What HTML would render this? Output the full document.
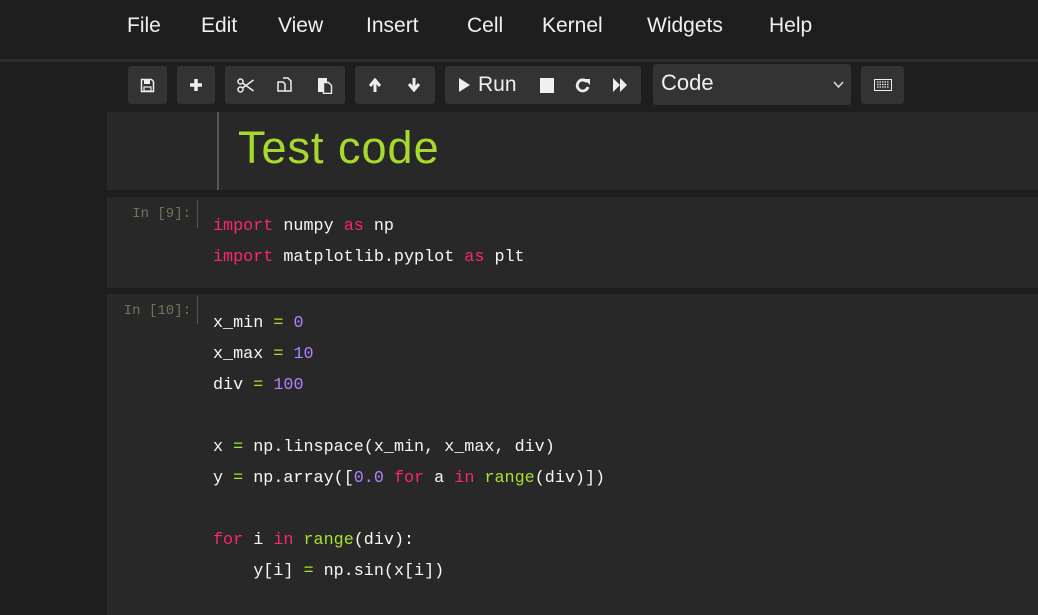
<!DOCTYPE html>
<html><head><style>
*{margin:0;padding:0;box-sizing:border-box}
body{width:1038px;height:615px;background:#1e1e1e;overflow:hidden;position:relative;font-family:"Liberation Sans",sans-serif;color:#fff}
.abs{position:absolute}
.menu{font-size:21px;top:14px;color:#f0f0f0}
.btn{position:absolute;top:66px;height:38px;background:#333;border-radius:3px}
.ic{position:absolute;top:0;height:38px;line-height:38px;font-size:17px;text-align:center;color:#eee}
.code{font-family:"Liberation Mono",monospace;font-size:16.75px;color:#f8f8f2;position:absolute;left:213px;white-space:pre;line-height:31px}
.k{color:#f92672}.n{color:#ae81ff}.o{color:#a6e22e}.b{color:#a6e22e}
.pr{position:absolute;font-family:"Liberation Mono",monospace;font-size:14px;color:#75715e;text-align:right;width:90px}
</style></head><body>
<div class="abs menu" style="left:127px">File</div>
<div class="abs menu" style="left:201px">Edit</div>
<div class="abs menu" style="left:278px">View</div>
<div class="abs menu" style="left:366px">Insert</div>
<div class="abs menu" style="left:467px">Cell</div>
<div class="abs menu" style="left:542px">Kernel</div>
<div class="abs menu" style="left:647px">Widgets</div>
<div class="abs menu" style="left:769px">Help</div>
<div class="abs" style="left:0;top:59px;width:1038px;height:3px;background:#2c2c2c"></div>

<div class="btn" style="left:128px;width:39px"><svg class="abs" style="left:12px;top:12px" width="15" height="15" viewBox="0 0 15 15"><path d="M1.5 1.5h10l2 2v10h-12z" fill="none" stroke="#eee" stroke-width="1.5"/><rect x="4" y="2" width="6" height="4" fill="#eee"/><rect x="4" y="9" width="7" height="4" fill="none" stroke="#eee" stroke-width="1.2"/></svg></div>
<div class="btn" style="left:177px;width:38px"><svg class="abs" style="left:12px;top:12px" width="14" height="14"><path d="M7 1v12M1 7h12" stroke="#eee" stroke-width="3.5"/></svg></div>
<div class="btn" style="left:225px;width:120px">
<svg class="abs" style="left:12px;top:12px" width="18" height="15"><circle cx="3.5" cy="3.5" r="2.5" fill="none" stroke="#eee" stroke-width="1.5"/><circle cx="3.5" cy="11.5" r="2.5" fill="none" stroke="#eee" stroke-width="1.5"/><path d="M5.5 5l11 8M5.5 10l11-8" stroke="#eee" stroke-width="1.5"/></svg>
<svg class="abs" style="left:52px;top:11px" width="16" height="17"><path d="M1 5h5l2 2v7H1zM6 1h5l3 3v10H8" fill="none" stroke="#eee" stroke-width="1.5"/></svg>
<svg class="abs" style="left:92px;top:11px" width="16" height="17"><path d="M1 1h9v4H6v10H1z" fill="#eee"/><path d="M6.5 5.5h5l3 3v8h-8z" fill="none" stroke="#eee" stroke-width="1.4"/></svg>
</div>
<div class="btn" style="left:355px;width:80px">
<svg class="abs" style="left:13px;top:12px" width="14" height="15"><path d="M7 14V3M2 8l5-6 5 6" fill="none" stroke="#eee" stroke-width="3"/></svg>
<svg class="abs" style="left:52px;top:11px" width="14" height="15"><path d="M7 1v11M2 7l5 6 5-6" fill="none" stroke="#eee" stroke-width="3"/></svg>
</div>
<div class="btn" style="left:445px;width:196px">
<svg class="abs" style="left:13px;top:11px" width="12" height="16"><path d="M1 1l11 7-11 7z" fill="#eee"/></svg>
<div class="ic" style="left:33px;font-size:21px;color:#f0f0f0">Run</div>
<div class="abs" style="left:95px;top:12px;width:14px;height:15px;background:#f0f0f0"></div>
<svg class="abs" style="left:130px;top:11px" width="16" height="16"><path d="M12 5A5.5 5.5 0 1 0 13 10" fill="none" stroke="#eee" stroke-width="2.8"/><path d="M9 2h6v6z" fill="#eee"/></svg>
<svg class="abs" style="left:167px;top:11px" width="16" height="16"><path d="M1 1l7 7-7 7zM8 1l7 7-7 7z" fill="#eee"/></svg>
</div>
<div class="btn" style="left:653px;width:198px;top:64px;height:41px">
<div class="abs" style="left:8px;top:6px;font-size:22px;color:#f0f0f0">Code</div>
<svg class="abs" style="left:180px;top:17px" width="11" height="8"><path d="M1 1l4.5 5L10 1" fill="none" stroke="#ddd" stroke-width="1.5"/></svg>
</div>
<div class="btn" style="left:861px;width:43px"><svg class="abs" style="left:13px;top:13px" width="18" height="12"><rect x="0.5" y="0.5" width="17" height="11" fill="none" stroke="#eee"/><path d="M3 3h12M3 5.5h12M3 8h12" stroke="#eee" stroke-width="1.3" stroke-dasharray="1.5 1"/></svg></div>

<div class="abs" style="left:107px;top:112px;width:931px;height:78px;background:#282828"></div>
<div class="abs" style="left:217px;top:112px;width:2px;height:78px;background:#555"></div>
<div class="abs" style="left:238px;top:122px;font-size:45px;letter-spacing:1px;color:#a6d92b">Test code</div>

<div class="abs" style="left:107px;top:197px;width:931px;height:91px;background:#282828"></div>
<div class="abs" style="left:197px;top:200px;width:1px;height:28px;background:#555"></div>
<div class="pr" style="left:101px;top:206px">In [9]:</div>
<div class="code" style="top:211px"><span class="k">import</span> numpy <span class="k">as</span> np
<span class="k">import</span> matplotlib.pyplot <span class="k">as</span> plt</div>

<div class="abs" style="left:107px;top:294px;width:931px;height:321px;background:#282828"></div>
<div class="abs" style="left:197px;top:296px;width:1px;height:28px;background:#555"></div>
<div class="pr" style="left:101px;top:303px">In [10]:</div>
<div class="code" style="top:308px">x_min <span class="o">=</span> <span class="n">0</span>
x_max <span class="o">=</span> <span class="n">10</span>
div <span class="o">=</span> <span class="n">100</span>

x <span class="o">=</span> np.linspace(x_min, x_max, div)
y <span class="o">=</span> np.array([<span class="n">0.0</span> <span class="k">for</span> a <span class="k">in</span> <span class="b">range</span>(div)])

<span class="k">for</span> i <span class="k">in</span> <span class="b">range</span>(div):
    y[i] <span class="o">=</span> np.sin(x[i])</div>
</body></html>
